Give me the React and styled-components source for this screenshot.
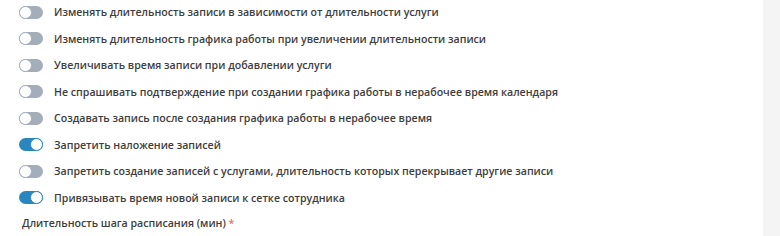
import React from "react";
import styled, { createGlobalStyle } from "styled-components";

const Global = createGlobalStyle`
  html, body { margin: 0; padding: 0; background: #fff; }
  body { font-family: "Open Sans", "Liberation Sans", sans-serif; }
`;

const Page = styled.div`
  display: flex;
  width: 780px;
  height: 236px;
  overflow: hidden;
`;

const Main = styled.div`
  flex: 1;
  background: #fff;
  padding: 0 0 0 19px;
  margin-top: -1px;
  display: flex;
  flex-direction: column;
`;

const Side = styled.div`
  width: 17px;
  background: #f4f4f4;
`;

const Row = styled.div`
  display: flex;
  align-items: center;
  height: 26.5px;
  gap: 11px;
`;

const Track = styled.div`
  position: relative;
  width: 24px;
  height: 13px;
  border-radius: 7px;
  background: ${(p) => (p.$on ? "#2a86bf" : "#a4aebb")};
  flex-shrink: 0;
`;

const Knob = styled.div`
  position: absolute;
  top: 0;
  left: ${(p) => (p.$on ? "11px" : "0")};
  width: 13px;
  height: 13px;
  box-sizing: border-box;
  border-radius: 50%;
  background: #fff;
  border: 1.5px solid ${(p) => (p.$on ? "#2a86bf" : "#a4aebb")};
`;

const Label = styled.span`
  font-size: 10.6px;
  font-weight: 600;
  color: #3d3d3d;
  white-space: nowrap;
`;

const FieldLabel = styled.div`
  margin-top: 5px;
  margin-left: 3px;
  font-size: 10.6px;
  font-weight: 600;
  color: #3d3d3d;
`;

const Star = styled.span`
  color: #f06b6b;
`;

const items = [
  ["Изменять длительность записи в зависимости от длительности услуги", false],
  ["Изменять длительность графика работы при увеличении длительности записи", false],
  ["Увеличивать время записи при добавлении услуги", false],
  ["Не спрашивать подтверждение при создании графика работы в нерабочее время календаря", false],
  ["Создавать запись после создания графика работы в нерабочее время", false],
  ["Запретить наложение записей", true],
  ["Запретить создание записей с услугами, длительность которых перекрывает другие записи", false],
  ["Привязывать время новой записи к сетке сотрудника", true],
];

export default function App() {
  return (
    <Page>
      <Global />
      <Main>
        {items.map(([t, on]) => (
          <Row key={t}>
            <Track $on={on}>
              <Knob $on={on} />
            </Track>
            <Label>{t}</Label>
          </Row>
        ))}
        <FieldLabel>
          Длительность шага расписания (мин) <Star>*</Star>
        </FieldLabel>
      </Main>
      <Side />
    </Page>
  );
}
